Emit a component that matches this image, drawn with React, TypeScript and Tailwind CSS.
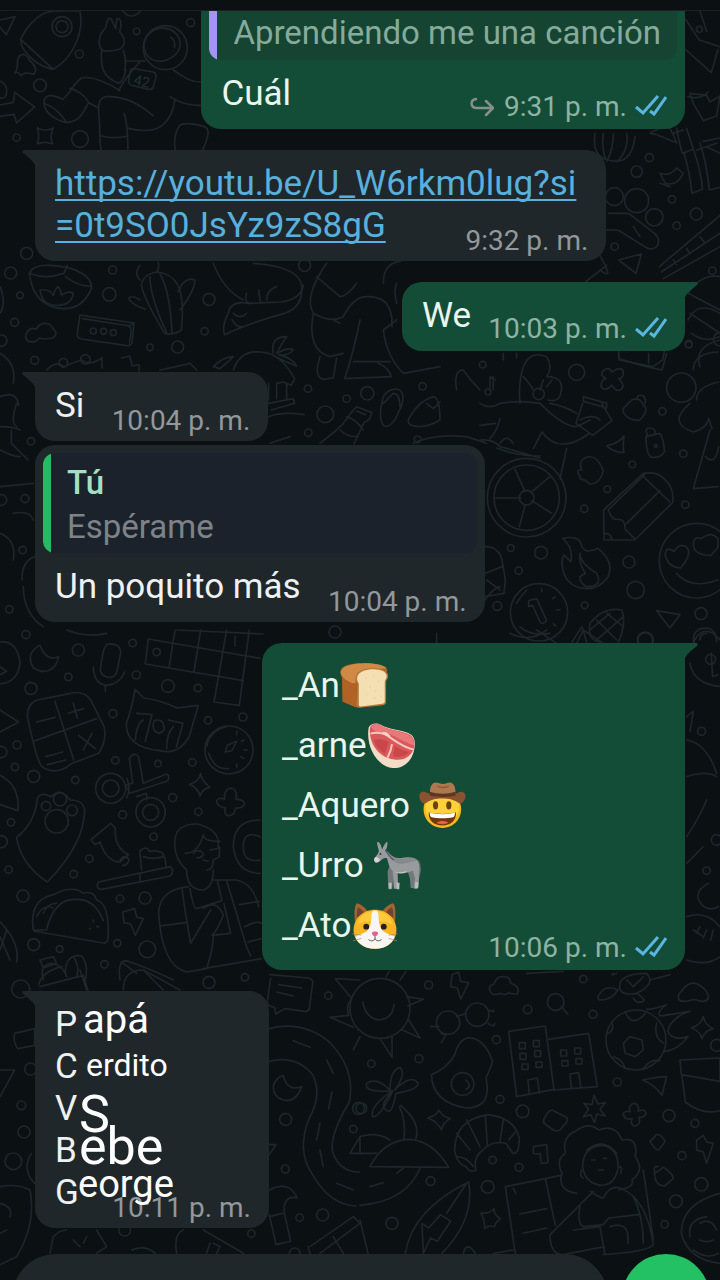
import type { ReactNode } from 'react'
import { clsx } from 'clsx'

type EmojiName = 'bread' | 'meat' | 'cowboy' | 'donkey' | 'cat'

interface DoodleGroup {
  origin: string;
  paths: string[];
  circles: number[][];
}

// Line drawings of the chat wallpaper, three units per pixel inside each group
const doodles: DoodleGroup[] = [
  {
    origin: 'translate(0 0) scale(0.3333)',
    paths: [
      'M62 118C90 60 130 35 160 33H240C252 90 225 170 160 208L62 118ZM62 118C60 150 110 200 160 208',
      'M62 165c-20 15 0 30-18 55 10-8 14 0 18 8 10-14 25-8 40-6 12-15 0-30-14-42-6-14-16-20-26-15',
      'M0 60l45-10-26 54-19-22',
      'M440 110c30-40 80-30 98 6 12 36-20 64-56 68-46 0-60-44-42-74M512 112q14 8 12 30',
      'M305 150c-4 50 2 80 50 100 14-4 18-20 22-40M305 150c-14-20-6-50 10-64 8-14 4-36 18-30l14 30 4-30c14-4 14 20 8 40 20 20 18 50-10 54-18 4-36 4-44 0M370 150q10 30 4 60',
      'M375 183h60M420 186c-30 30-50 60-64 86',
      'M400 206l60 10q10 4 8 16l-8 28q-4 10-14 8l-50-12q-12-4-10-16l4-24q2-10 10-10',
      'M520 210c30 20 50 36 82 36M510 290c30 20 60 28 94 26M525 300c-10 60-40 110-140 85M460 348c-40-36-90-60-140-58-20 2-26 16-24 50 6 40 0 80 8 110M372 340c12 30 10 70 12 110M304 408q40 10 80 0',
      'M360 272c-30-20-86-46-116-38-26 20-36 50-56 64-40-20-56-10-56 10 0 30 36 54 68 60 46-6 46-30 66-60l30 16M132 310c30 10 50 30 68 58M210 265c20 4 44 20 56 42',
      'M0 315l40-8 4-30 60 44-54 48-8-26-42 6M0 244q20 6 20 30t-20 20',
      'M112 384q24 12 48 0-12 24-2 48-24-10-46 0 8-24 0-48',
      'M540 375q24-10 70 4 20 4 12 34-16 50-24 47h-70c-10-40 0-70 12-85',
      'M368 33q26 30 54 0',
    ],
    circles: [[186, 80, 30], [186, 80, 18], [496, 143, 66], [410, 94, 10], [572, 68, 12], [238, 162, 12], [120, 256, 19], [50, 413, 11], [240, 417, 25]],
  },
  {
    origin: 'translate(560 0) scale(0.3333)',
    paths: [
      'M378 60l40 60 62 20M378 150l76 68 20-70M420 34l20 60M384 290q40 10 60-14M400 310l-10-30 50 6 10 20 30-18-10 60-40 14z',
      'M270 400q30-20 60-16l20 44-60-24zM350 384q10 60 18 76l32-12q-12-40-20-62M372 460q18 60 24 120l32-12q-6-60-28-120M340 400l30-10',
      'M420 430q20 60 28 140l32-8M430 424l50-10M440 440l40 20M410 450l60-20M300 520q30 10 50-16l20 16q-20 40-54 30l-16-30M330 560l-30-10',
      'M105 400q-10 70 40 80 70 20 80-70M160 400q0 50-20 84M200 400q8 50-30 86M130 400q-6 40 6 76',
      'M146 640l60 0 78 60q20 20 6 40-16 14-36 0l-80-50-40 0M220 680l20 30M176 780l68-18-16 58z',
      'M298 800L480 646M304 816L480 700M340 780l10 14M380 746l10 14M420 710l12 16M310 836L480 740M110 750q60 100 10 60M76 846l64-50',
      'M384 880q40-60 96-50M384 960q30-60 96-20M384 880l96 50M394 1000q40 30 86 10M390 940l90 60',
      'M176 1050l140-10-8 40-30 20-100-20zM420 1100q-20-60 60-80',
    ],
    circles: [[418, 88, 9], [268, 473, 12], [230, 515, 17], [336, 598, 11], [409, 642, 18], [350, 677, 11], [164, 740, 11], [457, 812, 11], [230, 602, 36], [283, 652, 26], [163, 590, 27], [386, 1034, 10], [480, 1018, 20]],
  },
  {
    origin: 'translate(0 250) scale(0.3333)',
    paths: [
      'M88 70q10-26 60-24 60 2 90 20 40 20 36 50-24 60-84 60-90-6-102-106q50 20 104 0l10-24M196 80q40 30 76 28',
      'M120 120q30-4 40 16 6-20 14-26 10 10 10 26 20-16 36-6-6 36-50 36t-50-46',
      'M240 195l26 4 136 20-6 60q-6 10-16 8l-136-20q-14-4-12-16zM248 206l140 22q10 4 0 50M402 218l-16 12',
      'M82 246q10-16 26-8 14-24 38-16 14 10 12 14 20 14 0 28-26 6-40 0-14 18-36 8-10-14 0-26',
      'M494 250q-60-100-70-144 6-36 50-40 40 4 60 40 20 40 10 134-20 16-50 10M450 80q0 60 50 168M480 72q30 50 36 176M436 178q-46-16-50-34 10-10 34 6M540 180q46-60 44-90-20-10-40 16l-10 20M420 90q-20-20 0-44M470 66q10-16 4-30',
      'M640 40q30 80 90 110M760 40q130 10 144 60 10 70-50 90-110 30-180 64-10-20 10-64 10-40 60-30l100-4q60-10 66-50M740 130q-10 30 16 30M776 120l6 40M800 150q0-30 30-40M700 190q20 20 40 0M696 210q16 24 30 20',
      'M980 40q-70 100-40 150 50 30 90 10 30-60 70-60 80-4 76 90M950 80l70 60q20 0 50-40M1150 100q0-60 50-66M1020 220q-20-10-20-10M940 190q-20 110 50 130l40-10M1080 210q-20 100-46 176l140-6q-10-30-40-40M1060 335h110M960 320q-20 60 10 68l30-4 10-60M1150 240q10 80 60 130l110-20M1150 240l40-30M1190 160q-10-40 0-60',
      'M640 350q30-30 60-30-20 20-40 36zM700 360q20-60 80-54 60 0 104 80l-10 20-24-10-20 4M820 310q-10-50 40-50-20 30-30 50 40-20 50-10-20 20-44 14 40 10 54 34-30-10-60-26M806 400v50M830 400v46M860 400v50M806 460l74-14 4 14-70 20M806 500q40-16 106-6M810 580l60-20',
      'M140 360q30-30 50-10 50-20 56-20 20 20 60-6v30M365 324l24-6 8 30 20-4v20M480 360q50-10 90-20l20 20',
      'M960 580l50-40 20-20 30-40 10-10 46 18-8 20-16 10-30 64M1070 484l26 10M1040 500q30 10 50 40M1020 540q20 20 50 20',
      'M1150 440q20-30 50-20 20 20-4 66-20 50-44 42-20-20-2-88M1150 460l30-30q20 0 20 40M1230 500q30-50 70-60 20 4 20 70-50 30-90 14-10-10 0-24M1280 460l20 16 20-20',
      'M0 110q20 50 0 80M0 310q50 30 40 90M0 440q50-20 56 26M50 460q-20 60 0 70M0 530q40 0 60 10M34 540v40l50 50M0 600q40 20 60 20',
    ],
    circles: [[32, 69, 18], [338, 60, 12], [60, 136, 10], [328, 133, 20], [44, 217, 12], [4, 272, 17], [104, 331, 12], [450, 292, 10], [533, 291, 18], [614, 244, 11], [627, 148, 18], [914, 46, 18], [924, 416, 11], [1040, 446, 11], [1102, 430, 20], [976, 493, 25], [925, 548, 11], [1268, 409, 11], [1253, 568, 10], [93, 574, 11], [80, 10, 18], [280, 243, 9], [311, 244, 9], [340, 248, 9], [190, 338, 13], [256, 328, 14]],
  },
  {
    origin: 'translate(480 340) scale(0.3333)',
    paths: [
      'M70 40v20M110 40v14M30 150v-40l16 10M120 190q-6-60 10-110 20-50 70-30 20 30 0 60 50 0 44 40-4 40-40 30M130 110q20 20 30 40M190 120l-10 30M200 140l16-20',
      'M0 190q30 20 60 0 60-10 120 0 70 70 110 70l40-20M210 190q50 10 80 30M310 170l70 20v14l-70-20zM308 190l-20 60 50 36 58-44-30-50M300 240q40-20 60 0M0 256l46-6M60 236q-10 40-30 60M0 300q40-4 60 20l120 34M60 310q20-30 40 0M160 326l26-50q50 70 140 6M260 326l-20 90M50 324q60 24 130 24',
      'M105 388l30 66M210 410l-58 48M46 474h76M118 560l18-66M215 520l-60-38',
      'M366 96q20-20 30 0 30-20 34 0 0 20-14 20 20 20 10 30-16 14-30-10-20 20-32 6-4-20 14-26-16-10-12-20',
      'M430 205l24-24q20-10 30 4l14 20q0 20-20 36-36 0-48-24zM470 180q0-16 14-14t12 24',
      'M498 290l40-10q10 4 16 54-10 20-40 18-16-10-16-62zM502 284q-10-20 8-20t14 16',
      'M380 318q40-10 52-30-4 40 0 50-30 0-52-20M320 352q30-10 50 40-10 40-40 40-10-8-16-12-16 0-14-12-16-20 6-18-14-26 14-38',
      'M490 400q40-6 60 14 34 30 28 74L464 600l-92 0-1-90zM490 410l80 76M384 510l110-106M440 550l100-98M386 512q10 30 30 26 20 0 20 30l30 30M374 580q20 0 22 20',
      'M248 595q50-10 56 20 10 30 50 10 50 40 30 86-30 40-70 34-60-4-68-70 0-20 6-30 10 10 20 20 10-40-24-70M300 640q0 30 50 60 20 40-30 40-20-10-20-30l16-10q-20-30-16-60',
      'M640 90q0-50 74-54M650 180q0-40 66-54M630 190q-70 60 10 86 40-10 46-40l10 30M690 270l-50 176 74-6M676 350q30 30 40-30',
      'M556 646q0-30 26-12 20-30 40-10 14 20-20 60-36 0-46-38M640 616q0-30 24-20 30-24 50 0v26l-20 24q-50 0-54-30M590 700q40 50 124 20',
      'M16 620q40 0 50 40l10 60-4 40-56 10M16 700l50-20M20 720l40 30',
      'M146 782l24-6 30 66q-10 14-20 4l-22-50-12 4zM110 790q10-20 30-40M120 860q30 30 90 20M185 745v10M226 770l-8 6M240 810h-10M228 858l-8-6',
      'M330 850q40-50 96-40 14 40-10 96M330 850q-10 50 30 56M350 840l60 60M380 820l50 40M330 870l60-50M350 900l80-70M276 906l30-46 14 46M530 812l70 12-30 40z',
      'M416 40v16q60 20 130 34l14-50M506 40v30M640 906q0-50 50-40 20 10 20 40M660 900q0-20 20-20',
    ],
    circles: [[140, 473, 118], [140, 473, 98], [140, 473, 22], [176, 162, 17], [290, 97, 24], [547, 214, 11], [610, 341, 11], [527, 318, 4], [457, 373, 10], [382, 448, 10], [313, 506, 11], [616, 494, 11], [183, 638, 19], [92, 624, 10], [116, 692, 11], [447, 666, 18], [467, 750, 26], [52, 798, 13], [314, 796, 10], [663, 821, 18], [177, 817, 86], [604, 143, 44], [650, 662, 112], [8, 74, 10], [24, 156, 9], [626, 12, 11], [496, 900, 24]],
  },
  {
    origin: 'translate(0 360) scale(0.3333)',
    paths: [
      'M0 380l100-10M40 460q50-10 60 20M0 520q50 20 40 80M66 660q0-60 40-70M70 680q0 80 60 120M1455 720q30-40 45-40',
      'M1370 90q-10-60 20-60 20 30 50 60M1480 50v40M1240 250q60-30 160-20l60 20',
    ],
    circles: [[75, 416, 12], [68, 570, 11], [28, 748, 11], [4, 420, 16]],
  },
  {
    origin: 'translate(0 630) scale(0.3333)',
    paths: [
      'M0 36q50-6 60 60-4 60-60 66M0 110l20 14-20 10M120 46q20 50 56 34-10 46-50 44-40-6-34-50 10-20 28-28',
      'M322 42q40-4 40 26l-12 60q-10 20-32 12-20-6-16-30l8-46q4-14 12-22M280 110q0 50 40 56 40-4 54-40M316 166v18M200 0q60 24 120 10',
      'M445 27l335 58M436 102l294 50M445 27l-9 75M525 0l-18 112M602 0l-20 126M680 0l-38 216 76 10 30-226M705 18v30M530 0l260 12',
      'M82 260q0-40 30-50l100-20q40-10 60 20l40 80q10 40-16 80l-80 30q-50 40-90 10-14-10-44-150M165 214l56 176M100 334l190-68M110 276l56-14M205 250l46-14M220 220l12 44M236 316l50 40M250 360l26-50M138 380l50-14M142 404l56-14',
      'M405 178l26 26q50 6 100 30l64-8-26 90q-30 60-90 46-100-10-100-80 20-60 26-104M410 250l46 4-20 80M430 270q-20 10-24 60M505 270l44 10-20 70M520 290q-20 20-20 66M470 270q20 0 20 14 10 20-14 26-20-6-16-30 2-10 10-10',
      'M676 366l6-20 28-12-14 28-20 4M620 350q10-50 60-60M626 370q16 50 60 46M710 304v10M732 330l-8 4M742 360h-10M732 386l-10-6M710 412v-10',
      'M388 384q14-20 28-4l14 80 70-28q14 10 0 22l-110 36-14-24 22-6zM410 500l30-10v20M380 444q14 30 0 60',
      'M568 464q30-10 34-34 0 20 28 42-24 4-30 26-6-26-32-34M650 514q4-14 24-6-4-30 20-34 20 4 14 34 24 0 26 14-6 14-28 12 0 20-20 24-16-4-10-24-26-4-26-20',
      'M110 520q0-40 44-20 30-30 56 10 40 0 44 30 0 100-112 216Q60 700 50 622q50-40 60-102',
      'M272 630l60-50 14 14q-4 60 40 80l-26 22q-40 0-60-60l-14 8zM360 690q14-20 28 0-10 20-20 16M295 756l216-46q14 14 0 28l-206 40q-20 0-10-22M425 720l-6-56q20-20 30 0 40-6 46 20l4 30M430 680q30 10 60 0M420 732v20',
      'M100 900q-14-90 60-106 60-30 90-4 30-10 40 20 40 10 34 120l-10 10-210-36zM140 896q20-70 60-84 80-20 110 60M104 900q30 0 36 0M130 850q10-30 40-30M280 870v6M290 890h6M268 896h4M110 860q20-40 50-26',
      'M368 846l36-10 6 26 20 4-24 50-14-34-20-4zM524 640q0-60 70-58 70 20 60 70M524 640q0 50 36 80 0 60 50 60 30-10 30-60M556 670q40 0 54-56 0 20 50 20M580 670q16-16 30 0 0 14-20 14M630 660l30-6M610 690l14 4M620 720q20 0 20-30l18-10v-30',
      'M566 770q-90 10-90 80 10 160 84 176l60-10q20-60 20-100M480 888l76-10M546 776l10 70 16 94 60-100M570 776q10 60 20 60l76-24-14-60M640 750h70q50 10 66 80M680 752l60 200 12 26M718 824l60-10M734 890q40-20 50-10M744 936l40-10M610 1016l174-30M610 836q40-30 60 20-20 50-34 60l56-6-20-90',
      'M0 436q60 30 54 106M0 524l54 18M0 240l56 36-56 30M0 876q60 60 50 120M0 920l30 70M20 900L0 960',
      'M130 1050q-14-50 30-50 30 10 40 40M120 990l40-10 10 20-40 14zM196 1030q0-60 50-52 20 30 10 72M220 980q20 30 10 60M360 1050q-10-70 30-54 60 20 130 54M370 1000l40 30M780 570q-80 0-80 80 10 80 80 80M780 620q-50-20-50 30t50 40',
    ],
    circles: [[78, 14, 12], [235, 60, 18], [398, 39, 11], [205, 141, 11], [93, 175, 18], [409, 135, 12], [504, 168, 19], [594, 174, 11], [339, 251, 12], [624, 271, 11], [729, 261, 12], [51, 345, 12], [4, 366, 17], [346, 391, 11], [474, 401, 10], [577, 397, 11], [45, 411, 11], [101, 439, 18], [226, 450, 11], [518, 503, 12], [595, 545, 11], [368, 554, 12], [33, 577, 11], [461, 620, 11], [268, 686, 11], [26, 719, 11], [221, 732, 11], [69, 798, 18], [360, 806, 11], [435, 804, 18], [352, 940, 11], [101, 944, 18], [179, 957, 10], [442, 958, 25], [313, 1003, 11], [687, 360, 72], [332, 475, 45], [332, 475, 25], [452, 547, 44], [452, 547, 24], [170, 574, 35], [138, 528, 14], [180, 508, 20], [216, 541, 16], [470, 66, 11], [4, 635, 18]],
  },
  {
    origin: 'translate(250 630) scale(0.3333)',
    paths: [
      'M1330 40q20-50 60-30l20 20M1320 100q10 60 90 70M1384 70l4 70 16-6M1310 330q60 10 90 100M1310 440q60-20 90 0M1310 620q40-60 60-110M1310 260l20-16-10 60M1310 700l50-50M1376 760q-40 20-30 50 20 40 60 20M1310 860q60-20 100 30M1330 900l30 20M1350 890l-10 20M1370 900l-10 24M1390 900l-8 30M1310 990q60 20 100-10',
      'M560 40v-30M780 10q60 30 110-10M980 40l20-40M1060 40l-60-40M860 0l60 40',
    ],
    circles: [[1382, 88, 15], [1355, 304, 12], [1370, 722, 11], [255, 6, 18], [1186, 30, 22], [1400, 630, 16]],
  },
  {
    origin: 'translate(0 970) scale(0.3333)',
    paths: [
      'M116 44q10-40 70-54M120 50l130-34 14 46M240 0l20 60M370 60q0-60 60-60l110 60M430 0l60 60M0 300h44L0 380M44 190l60-14v50l-50 10q-16-20-10-46M0 650q50-10 90 10 20 100-40 200L0 884M0 700q40 10 30 40M0 790l20-10M104 640q-40-40-10-90',
      'M810 14l116 10q14 4 12 16l-10 76q-4 10-14 8l-60-8-26 16-4-20q-24-4-22-18l10-70M836 44l70 10M830 66l50 12',
      'M1080 30l-74-4 50 60q-20 20-10 50l-56 6 70 30M1060 240l20-40',
      'M808 176q100-26 180 40 80 80 60 180-60 100-50 150 20 60 80 60M808 274q80-20 130 40 30 60-10 130-40 100 10 170 50 90 130 94M880 212l50 20M980 270l20 40M996 366l-10 50M960 460l-10 50M960 540l10 50M1010 640l50 20M850 316q10 50 56 34-20 50-56 40-30-10-30-40 4-24 30-34M808 524l20 0-20 30M1050 550l30-50v50z',
      'M150 850l10-50q20-20 40-20M290 780l30 50-30 20M220 810l20 20M260 800l-10 20M396 840q40-16 70 10M530 850q-10-60 20-70M610 780l120 70M640 820l20 10-10 20M620 850l10-30M808 660q60-30 84 24-40-10-40 40l20 90-44 10-20-90M808 740l40-10M930 830l130-90 20 20-120 90M1000 800l30 50M930 850l-6-20',
    ],
    circles: [[62, 57, 27], [627, 37, 18], [735, 22, 11], [985, 77, 11], [92, 297, 18], [64, 406, 13], [72, 486, 18], [40, 574, 25], [857, 448, 18], [856, 597, 12], [899, 743, 11], [968, 735, 18], [754, 791, 11], [884, 850, 16], [1060, 477, 11], [1076, 415, 18], [374, 780, 18]],
  },
  {
    origin: 'translate(360 970) scale(0.3333)',
    paths: [
      'M8 96q10 50 50 54 40-4 44-46M140 80l50 8-46 20M146 150l34 54-52-24M60 206l36 56v-60M120 30l18-26M78 20l10-16',
      'M276 14l20-8 6 28 24 4-24 50-10-34-20-4zM390 62q-6-16 12-20 10-30 40-20 10 6 10 18 30 10 20 32-20 0-26-4-10 10-22 2-30 10-34-8M956 86q-4-14 10-24 20-30 46-20 30 14 34 40-4 14-24 12-20-8-26-4-34 10-40-4',
      'M605 110l18 22M290 140l24-8M236 170h-24M386 120q20 10 14 0M384 160q20 14 20 0M244 190l14 4-14 24M500 10l110-6M714 80q20-40 60-20-20 30-50 30-10 0-10-10M780 40q10-30 80-30 30 30-30 60-60 10-50-30M770 10q-20 10-10 0M870 30l60-16M830 70q30 20 20 24-20 10-30-10M800 30l20 20 30-30',
      'M320 204q50-6 78 70-10 30-20 50 20 90-60 90-100-16-104-100 50-20 70-60 10-40 36-50M318 330q20 20 0 28',
      'M446 184l110-16 26 190-112 22zM566 208l120-18 26 160-130 10M478 218h18v18h-18zM520 212h18v18h-18zM480 250h18v18h-18zM524 242h18v18h-18zM486 282h18v16h-18zM528 276h18v16h-18zM602 240h18v18h-18zM644 234h18v18h-18zM606 272h18v16h-18zM648 266h18v16h-18zM508 374l-4-44 28-6 6 44M634 354l-4-42 26-4 6 42',
      'M790 220l20-20 36 10 4 30-24 20-30-10zM796 126q20 50 60 4M744 190q20-10 12-30M760 260q30 10 34 34M890 160q-10 40 20 60M850 296q20-30 50-24M860 118q20 0 60-14-30 20-20 34 30-4 90-14-60 20-66 60 10 30 60 16-30 40-70 44',
      'M994 174q30-10 36-34 4 24 30 36-26 6-34 30-6-24-32-32M960 270l120-6v70l-116-20zM966 316l10 80q50 40 104 26M848 330q50-10 72-10l-14 56q-20-30-58-46',
      'M98 362Q10 370 20 340q30-20 70 20 0-60 30-68 20 20-16 68 50-50 70-20 0 20-66 30-10 50-20 54-40-10 10-60-40 80-60 76-10-30 56-76M118 410q20 40 14 96M122 406q60 50 46 100M30 590q40-80 120-82 70 6 116 84zM0 500q50-16 90 10M0 550h50M30 650l40-12M180 594q-40 100-180 112M110 610l20-16',
      'M204 444q30-10 32-24 10 20 34 26-20 10-26 34-10-24-40-36M284 540q0-90 100-106 80 10 94 70 0 50-20 46-20-30-20-30-40-10-70 20-30 24-20 60-20 10-30-10-30-10-34-50M290 490l40 50M320 450l40 80M376 436l6 90M430 450l-10 64M466 486l-20 24M290 560q30 0 50 30',
      'M556 440q10-20 20-20l40 20q10 4 4 16l-20 24q-10 6-20 0l-28-20q-4-10 4-20M672 400l24 4 6-28 12 26 22-4-16 20 16 20-26-6-6 26-12-24-22 6 16-22zM790 430q10-10 20-4-6-20 10-26 20 0 14 24 20-10 24 6-4 14-22 12 10 20-10 26-16 0-10-22-24 6-26-16M870 514l20-20q10-4 26 20l-20 26q-10 0-26-26M1010 510l20-14 10 20 20 4-20 60-10-34-20-6zM884 610l26-18q30 20 30 34l-26 22q-30 0-30-38M884 606q-6-20 10-16M520 530l40-6 4 54-20 2-4-30q-10 4-20 0z',
      'M650 670q-60-10-44-60-20-40 10-60-10-50 30-66 40-30 70-4 50-20 70 30 50-10 40 50 30 40-10 70 10 20-40 30M668 590q0-60 60-64 50 10 46 70-10 50-50 50-50-6-56-56M680 540q50-40 90 10M695 570h10M730 565h10M716 600h14M664 600q-6 20 6 24M776 590q14 0 6 20',
      'M436 650l120-24 46-10M436 650l30 200M556 626l30 140M480 732l80-16M490 790l70-16M700 664l-130 130q0 60 40 60l124-24M690 664q30 20 40 20 20-40 50-30 80 30 100 170-10 20-150 30M660 710q-10 50 10 60l60-6 16-20 90-10M640 780l80-10 14 80M750 770q60-20 54 50M850 600l30 210M820 680q30 60 30 140M460 655l8 16',
      'M136 850q20-130 190-214 20 110-80 214M190 850l-4-90 20 14 36-40 30 20-40 60-20-10zM260 730l60-90M362 730q30 0 40-14 0 20 20 30-16 10-18 24-20-6-30 6 0-30-12-46M0 750l24 100M400 850l60-10M310 850q10-40 36 0',
      'M1080 670q-116 30-116 120 20 80 116 90M990 800q-10-50 50-60M1000 840q40 30 76 10M1020 760q30-20 50 20M1020 810q20 10 40 0',
    ],
    circles: [[60, 115, 90], [206, 45, 12], [670, 27, 11], [587, 96, 25], [503, 118, 13], [699, 133, 12], [264, 158, 35], [352, 134, 35], [409, 209, 12], [177, 266, 12], [34, 281, 11], [308, 342, 34], [420, 388, 12], [488, 424, 19], [828, 210, 90], [772, 336, 12], [927, 437, 18], [1005, 460, 12], [398, 570, 11], [477, 592, 12], [212, 633, 13], [383, 651, 19], [96, 760, 18], [966, 557, 12], [1024, 643, 20], [948, 694, 19], [914, 763, 11], [4, 415, 16], [1070, 226, 18]],
  },
]

function Wallpaper() {
  return (
    <svg
      aria-hidden="true"
      viewBox="0 0 720 1280"
      preserveAspectRatio="xMidYMin slice"
      className="absolute inset-0 h-full w-full"
      fill="none"
      stroke="#1e2629"
      strokeWidth={5}
      strokeLinecap="round"
      strokeLinejoin="round"
    >
      {doodles.map((group) => (
        <g key={group.origin} transform={group.origin}>
          {group.paths.map((d) => <path key={d} d={d} />)}
          {group.circles.map(([cx, cy, r]) => <circle key={`${cx}-${cy}-${r}`} cx={cx} cy={cy} r={r} />)}
        </g>
      ))}
      <text x="133" y="84" fontSize="14" fontFamily="Roboto, sans-serif" strokeWidth={0} fill="#252e31" transform="rotate(14 133 84)">42</text>
    </svg>
  )
}

function Bread() {
  return (
    <>
      <path d="M32 70C26 46 60 38 100 38c40-2 74 8 76 22-4 20-60 20-86 40L80 174l-42-18-2-70c0-8-4-10-4-16Z" fill="#a8602a" />
      <path d="M32 68c0-22 40-30 76-30 36 0 62 8 66 16l-60 2c-20 4-40 20-36 44-16 0-40-12-46-32Z" fill="#cf8a45" />
      <path d="M38 90c14 6 32 10 42 12v72l-42-18Z" fill="#b06324" />
      <path d="M84 102C70 84 80 58 114 54c40-6 66 6 64 24 0 8-6 12-6 18v62c0 6-4 8-10 9l-72 8c-6 0-10-2-10-8Z" fill="#b9783a" />
      <path d="M88 100C76 84 84 62 116 58c36-5 58 5 58 20 0 8-6 10-6 18v58c0 6-2 8-8 9l-66 8c-6 0-6-2-6-8Z" fill="#f4dfb2" />
      <path d="M108 82l4 3M132 76l4 2M150 92l-4 3M120 110l5 2M142 122l-4 3M110 134l3 3M134 146l5-2M154 138l2 3" stroke="#e3c68f" strokeWidth={3} />
    </>
  )
}

function Meat() {
  return (
    <>
      <path d="M116 232c4-14 26-18 40-8 20 12 52 12 82 24 24 10 22 32 18 54-6 30-30 56-66 54-40-2-84-58-74-124Z" fill="#f2dcc8" />
      <path d="M120 232c6-14 24-16 36-6 20 12 52 12 80 24 22 8 22 24 20 42-6 26-28 42-60 38-40-4-80-40-76-98Z" fill="#d9585a" />
      <path d="M124 230c8-12 22-12 34-4 20 12 50 14 76 26 20 8 22 18 22 34-20-4-60-30-84-38-14-2-32 4-48-18Z" fill="#e9787a" />
      <path d="M122 250c18-6 32-2 46 2 24 16 60 44 86 46M188 282c-2 20-10 34-14 42" stroke="#f8c9c0" strokeWidth={6} fill="none" />
      <path d="M132 270c6 18 18 32 34 42l12-36c-16-8-32-12-46-6ZM192 320c20 4 40-2 50-14-16-2-32-10-46-18Z" fill="#c94649" />
      <path d="M158 246c10-4 20 4 26 12-10 2-20-2-26-12Z" fill="#f6d5cb" />
    </>
  )
}

function Cowboy() {
  return (
    <>
      <circle cx="342" cy="478" r="58" fill="#f8b91f" />
      <circle cx="342" cy="472" r="52" fill="#ffd23c" />
      <path d="M271 440c-2-14 12-20 24-12 20 8 74 8 94 0 12-8 26-2 24 12-2 14-12 24-22 18-20-18-78-18-98 0-10 6-20-4-22-18Z" fill="#8a5230" />
      <path d="M304 432c-2-26 8-38 22-36 8 0 10 4 18 4s10-4 18-4c14-2 22 12 20 36-24 6-54 6-78 0Z" fill="#ad7850" />
      <path d="M303 424c24 8 56 8 80 0v12c-24 6-56 6-80 0Z" fill="#5e3520" />
      <path d="M322 404c10 6 34 6 44 0-6 12-36 12-44 0Z" fill="#8c5836" />
      <ellipse cx="321" cy="466" rx="8" ry="13" fill="#6c4310" />
      <ellipse cx="362" cy="466" rx="8" ry="13" fill="#6c4310" />
      <path d="M300 488c28 6 56 6 84 0 2 24-16 40-42 40s-44-16-42-40Z" fill="#71380c" />
      <path d="M303 489c26 6 52 6 78 0 0 8-2 12-6 14-20 4-46 4-66 0-4-2-6-6-6-14Z" fill="#fff" />
      <path d="M324 520c8-8 28-8 36 0-10 6-26 6-36 0Z" fill="#e8604c" />
    </>
  )
}

function Donkey() {
  return (
    <>
      <path d="M182 646l12 18-4 48-1 8h-12l-2-56ZM236 660l16-6 6 34-2 28h-10l-2-28Z" fill="#74787a" />
      <path d="M148 602c-2-14-8-22-4-30 8 4 12 14 14 26 4-10 8-20 16-26 2 12-2 22-6 30 14 14 26 22 46 22 20-4 44-6 54 8 8 10 8 36 4 52l-2 28-2 6h-12l2-34-6-22c-16 10-34 10-46 6l1 36-1 14h-12l-3-54c-12-12-14-28-18-40-10-2-14 2-22 10-6 6-16 4-18-4 2-10 14-18 15-28Z" fill="#989b9d" />
      <path d="M172 600c14 16 26 26 46 26 20-4 40-4 52 6-20 0-34 8-52 10-28-4-40-24-46-42Z" fill="#85898b" />
      <path d="M270 632c8 16 6 34 2 48" stroke="#6e7274" strokeWidth={4} fill="none" />
      <path d="M134 630c-2-8 4-10 8-10l10 8c-6 10-16 14-18 2Z" fill="#d4d5d5" />
      <path d="M196 664c14 6 30 4 40-2-8 12-28 12-40 2Z" fill="#c8caca" />
      <path d="M202 700h10l-1 20h-8ZM178 700h10l-1 18h-8ZM260 698h10l-1 18h-9Z" fill="#b9bcbd" />
      <circle cx="153" cy="611" r="3" fill="#2e3133" />
      <path d="M168 598c8 14 16 26 26 32" stroke="#55595b" strokeWidth={4} fill="none" />
    </>
  )
}

function Cat() {
  return (
    <>
      <path d="M76 812c-2-26-2-46 6-56 12 2 26 14 34 26ZM200 812c2-26 2-46-6-56-12 2-26 14-34 26Z" fill="#a3652f" />
      <path d="M82 800c0-16 0-26 4-32 8 4 16 12 22 22ZM194 800c0-16 0-26-4-32-8 4-16 12-22 22Z" fill="#6f4331" />
      <path d="M72 838c0-36 30-62 66-62s66 26 66 62c0 34-28 58-66 58s-66-24-66-58Z" fill="#fbb522" />
      <path d="M84 822c4-26 26-42 54-42s50 16 54 42c-20-14-88-14-108 0Z" fill="#ffc93a" />
      <path d="M138 778c8 0 11 6 11 20 1 22 6 36 17 46 14 8 26 12 33 14-8 24-32 38-61 38s-53-14-61-38c7-2 19-6 33-14 11-10 16-24 17-46 0-14 3-20 11-20Z" fill="#f8f6f3" />
      <circle cx="111" cy="828" r="9" fill="#24211d" />
      <circle cx="165" cy="828" r="9" fill="#24211d" />
      <path d="M129 846c4-4 14-4 18 0 2 4-4 12-9 12s-11-8-9-12Z" fill="#e85d94" />
      <path d="M138 858v8M118 868c8 6 16 4 20-2 4 6 12 8 20 2" stroke="#5a4a44" strokeWidth={3} fill="none" />
      <path d="M68 850l28 4M70 872l26-8M208 850l-28 4M206 872l-26-8" stroke="#8f8a80" strokeWidth={2} />
    </>
  )
}

const emojis: Record<EmojiName, { label: string; viewBox: string; art: ReactNode }> = {
  bread: { label: '🍞', viewBox: '30 34 148 148', art: <Bread /> },
  meat: { label: '🥩', viewBox: '111 214 148 148', art: <Meat /> },
  cowboy: { label: '🤠', viewBox: '270 394 148 148', art: <Cowboy /> },
  donkey: { label: '🫏', viewBox: '130 574 148 148', art: <Donkey /> },
  cat: { label: '🐱', viewBox: '64 752 148 148', art: <Cat /> },
}

function Emoji({ name }: { name: EmojiName }) {
  const { label, viewBox, art } = emojis[name]
  return <svg role="img" aria-label={label} viewBox={viewBox} className="size-12 shrink-0">{art}</svg>
}

function ReadTicks() {
  return (
    <svg aria-hidden="true" viewBox="0 0 32 24" className="ml-2 h-6 w-8" fill="none" stroke="#5ab6e0" strokeWidth={3}>
      <path d="M1 12l7 6L23 1M15 16l4 3L31 2" />
    </svg>
  )
}

function ForwardArrow() {
  return (
    <svg aria-hidden="true" viewBox="0 0 24 20" className="mr-2.5 h-5 w-6" fill="none" stroke="#84918b" strokeWidth={2.5} strokeLinecap="round" strokeLinejoin="round">
      <path d="M6 2C0 3 0 11 7 11h15M16 4l7 7-7 7" />
    </svg>
  )
}

function Tail({ mine }: { mine: boolean }) {
  return (
    <svg
      aria-hidden="true"
      viewBox="0 0 15 20"
      className={clsx('absolute top-0 h-5 w-[15px]', mine ? '-right-3.5 -scale-x-100 text-[#144d37]' : '-left-3.5 text-[#20272a]')}
      fill="currentColor"
    >
      <path d="M3 0H15V20C15 12 8 8 2 3Q0 0 3 0Z" />
    </svg>
  )
}

interface BubbleProps {
  time: string;
  mine?: boolean;
  tail?: boolean;
  forwarded?: boolean;
  wide?: boolean;
  quote?: ReactNode;
  className?: string;
  children: ReactNode;
}

function Bubble({ time, mine = false, tail = false, forwarded = false, wide = false, quote, className, children }: BubbleProps) {
  return (
    <article
      className={clsx(
        'relative max-w-full shrink-0 rounded-[20px]',
        mine ? 'self-end bg-[#144d37] text-[#e9f5ef]' : 'self-start bg-[#20272a] text-[#eef1f2]',
        tail && (mine ? 'rounded-tr-none' : 'rounded-tl-none'),
        className,
      )}
    >
      {tail && <Tail mine={mine} />}
      {quote}
      <div className="grid">
        <div
          className={clsx(
            'col-start-1 row-start-1 pt-[13px] pb-3.5 pl-5 text-[35px] leading-[42px]',
            wide ? 'pr-[30px]' : mine ? 'pr-[214px]' : 'pr-[184px]',
          )}
        >
          {children}
        </div>
        <div
          className={clsx(
            'col-start-1 row-start-1 flex items-center self-end justify-self-end pr-[18px] text-[28px] leading-7',
            mine ? 'pb-2 text-[#8fb3a3]' : 'pb-1.5 text-[#92989b]',
          )}
        >
          {forwarded && <ForwardArrow />}
          <time>{time}</time>
          {mine && <ReadTicks />}
        </div>
      </div>
    </article>
  )
}

const riddles: { text: string; emoji: EmojiName }[] = [
  { text: '_An', emoji: 'bread' },
  { text: '_arne', emoji: 'meat' },
  { text: '_Aquero ', emoji: 'cowboy' },
  { text: '_Urro ', emoji: 'donkey' },
  { text: '_Ato', emoji: 'cat' },
]

const initials = ['P', 'C', 'V', 'B', 'G']

// Words typed over the last message, each one with its own size
const stickers = [
  { text: 'apá', place: 'left-12 top-[9px] text-[40px]' },
  { text: 'erdito', place: 'left-[51px] top-[58px] text-[32px]' },
  { text: 'S', place: 'left-[44px] top-[98px] text-[52px]' },
  { text: 'ebe', place: 'left-[44px] top-[130px] text-[52px]' },
  { text: 'eorge', place: 'left-[43px] top-[174px] text-[38px]' },
]

export default function App() {
  return (
    <div className="relative flex h-screen flex-col overflow-hidden bg-[#0b1013] font-[Roboto,sans-serif]">
      <Wallpaper />
      <header className="relative h-[11px] shrink-0 border-b border-[#1a2124] bg-[#0b1013]" />
      <main className="relative flex shrink-0 flex-col px-[35px]">
        <Bubble
          mine
          forwarded
          time="9:31 p. m."
          className="rounded-t-none"
          quote={
            <blockquote className="mx-2 flex overflow-hidden rounded-b-xl bg-[#154432] text-[#86aa9b]">
              <span className="w-2 shrink-0 bg-[#a594f5]" />
              <p className="px-4 pb-[5px] text-[33px] leading-[44px]">Aprendiendo me una canción</p>
            </blockquote>
          }
        >
          Cuál
        </Bubble>

        <Bubble tail wide time="9:32 p. m." className="mt-[21px]">
          <a href="https://youtu.be/U_W6rkm0lug?si=0t9SO0JsYz9zS8gG" className="text-[#57b0dd] underline decoration-2 underline-offset-4 [text-decoration-skip-ink:none]">
            https://youtu.be/U_W6rkm0lug?si<br />=0t9SO0JsYz9zS8gG
          </a>
        </Bubble>

        <Bubble mine tail time="10:03 p. m." className="mt-[21px]">We</Bubble>

        <Bubble tail time="10:04 p. m." className="mt-[21px]">Si</Bubble>

        <Bubble
          time="10:04 p. m."
          className="mt-1 pt-2"
          quote={
            <blockquote className="mx-2 flex overflow-hidden rounded-xl bg-[#1b222b] text-[33px] leading-[44px]">
              <span className="w-2 shrink-0 bg-[#26bb63]" />
              <div className="px-4 pt-2 pb-1">
                <p className="font-medium text-[#a4dfc4]">Tú</p>
                <p className="text-[#7d8388]">Espérame</p>
              </div>
            </blockquote>
          }
        >
          Un poquito más
        </Bubble>

        <Bubble mine tail time="10:06 p. m." className="mt-[21px] min-w-[423px]">
          {riddles.map((riddle) => (
            <p key={riddle.text} className="flex items-center leading-[60px] whitespace-pre">
              {riddle.text}
              <Emoji name={riddle.emoji} />
            </p>
          ))}
        </Bubble>

        <Bubble tail time="10:11 p. m." className="mt-[21px] min-w-[234px]">
          {initials.map((letter) => <p key={letter}>{letter}</p>)}
          {stickers.map((sticker) => (
            <span key={sticker.text} className={clsx('absolute z-10 leading-none text-white', sticker.place)}>
              {sticker.text}
            </span>
          ))}
        </Bubble>
      </main>
      <footer className="relative mt-[26px] flex shrink-0 gap-3.5 pr-2.5 pl-3">
        <div className="h-[88px] grow rounded-full bg-[#1f272a]" />
        <button type="button" aria-label="Mensaje de voz" className="size-[88px] rounded-full bg-[#24c064]" />
      </footer>
    </div>
  )
}
